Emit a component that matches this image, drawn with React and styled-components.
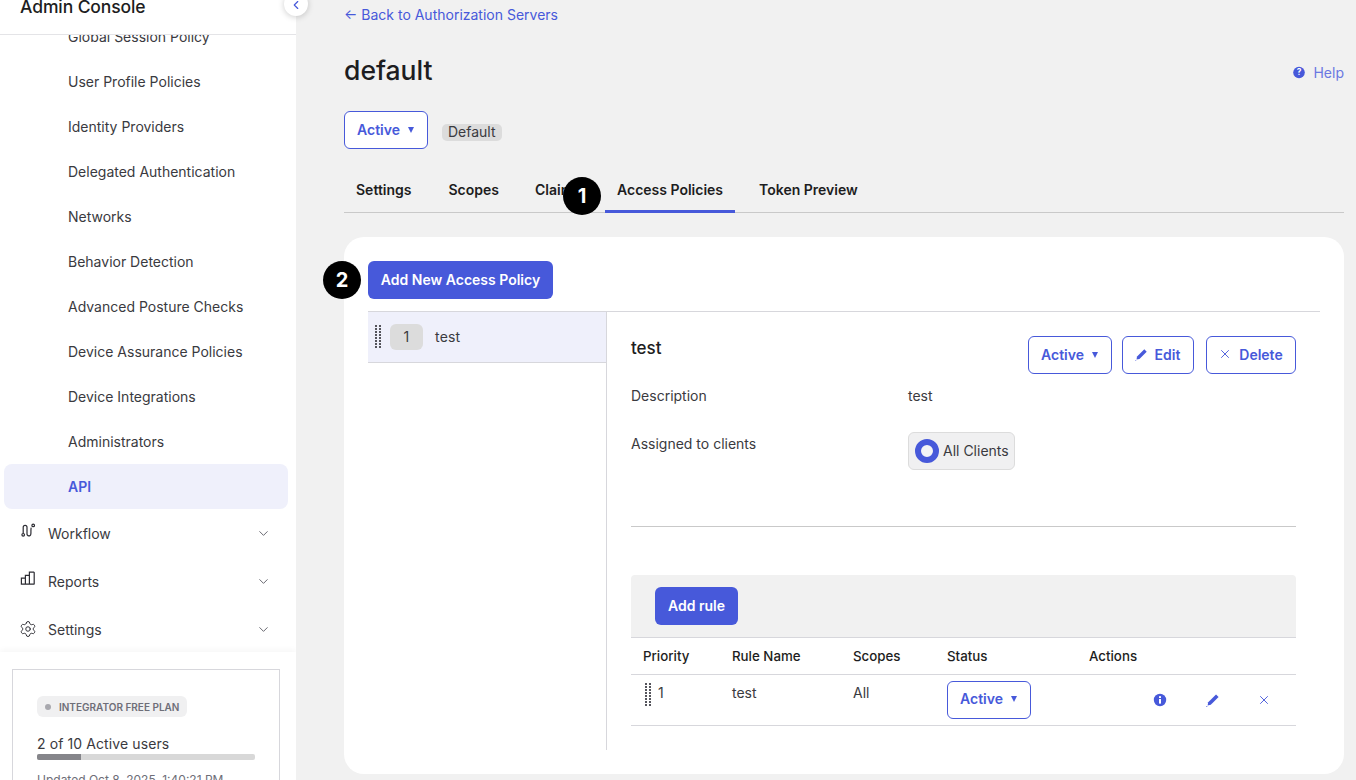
import React from "react";
import styled, { createGlobalStyle } from "styled-components";
import { ChevronDown, ChevronLeft, Settings, X } from "lucide-react";

const BLUE = "#4759da";
const INK = "#1d1d21";
const TEXT = "#3a3a40";
const LINE = "#d7d7dc";

const GlobalStyle = createGlobalStyle`
  html, body { margin: 0; padding: 0; height: 780px; overflow: hidden; background: #f1f1f1; }
  body { font-family: Inter, "Liberation Sans", sans-serif; font-size: 14px; color: ${INK}; }
  *, *::before, *::after { box-sizing: border-box; }
`;

const Page = styled.div`
  display: flex;
  width: 1356px;
  height: 780px;
  overflow: hidden;
`;

/* ---- sidebar ---- */
const Sidebar = styled.aside`
  position: relative;
  flex: 0 0 296px;
  height: 780px;
  background: #fff;
  display: flex;
  flex-direction: column;
`;
const SideHeader = styled.div`
  flex: 0 0 35px;
  border-bottom: 1px solid #e4e4e7;
  padding: 0 0 0 20px;
  overflow: hidden;
  position: relative;
  z-index: 1;
  background: #fff;
`;
const Brand = styled.div`
  margin-top: -4px;
  font-size: 17.5px;
  line-height: 22px;
  letter-spacing: -0.1px;
  font-weight: 500;
  color: ${INK};
`;
const CollapseButton = styled.button`
  position: absolute;
  top: -8px;
  left: 284px;
  width: 24px;
  height: 24px;
  border: 0;
  border-radius: 50%;
  background: #fff;
  box-shadow: 0 1px 6px rgba(0, 0, 0, 0.2);
  color: ${BLUE};
  display: flex;
  align-items: flex-end;
  justify-content: center;
  padding: 0 0 4px;
  z-index: 2;
`;
const Nav = styled.nav`
  flex: 1;
  min-height: 0;
  overflow: hidden;
`;
const NavList = styled.div`
  margin-top: -21px;
  padding: 0 8px 0 4px;
`;
const NavItem = styled.div`
  height: 45px;
  display: flex;
  align-items: center;
  padding-left: 64px;
  font-size: 14px;
  line-height: 20px;
  border-radius: 8px;
  color: ${(p) => (p.$active ? BLUE : TEXT)};
  font-weight: ${(p) => (p.$active ? 600 : 400)};
  background: ${(p) => (p.$active ? "#eff0fb" : "transparent")};
`;
const NavGroup = styled.div`
  height: 48px;
  display: flex;
  align-items: center;
  margin-left: 16px;
  margin-right: 17px;
  font-size: 14px;
  color: ${TEXT};
  &:first-of-type { margin-top: 1px; }
  svg.lead { flex: 0 0 16px; margin: -4px 12px 0 0; color: #2c2c33; }
  svg.gear { flex: 0 0 18px; margin: 0 11px 0 -1px; color: #2c2c33; }
  svg.chev { margin-left: auto; color: #5f5f68; }
`;
const Footer = styled.div`
  flex: 0 0 128px;
  min-height: 0;
  overflow: hidden;
  padding: 17px 16px 0 12px;
  box-shadow: 0 -2px 6px rgba(0, 0, 0, 0.04);
  background: #fff;
  position: relative;
`;
const PlanBox = styled.div`
  border: 1px solid ${LINE};
  padding: 26px 24px 0;
  height: 140px;
`;
const PlanChip = styled.div`
  display: flex;
  align-items: center;
  gap: 8px;
  width: fit-content;
  height: 21px;
  padding: 0 8px;
  background: #f0f0f1;
  border-radius: 6px;
  font-size: 10px;
  font-weight: 600;
  color: #6e6e78;
  &::before {
    content: "";
    width: 6px;
    height: 6px;
    border-radius: 50%;
    background: #a8a8ae;
  }
`;
const PlanText = styled.div`
  margin-top: 17px;
  font-size: 14px;
  line-height: 20px;
  letter-spacing: 0.1px;
  color: ${TEXT};
`;
const Progress = styled.div`
  height: 6px;
  width: 218px;
  border-radius: 2px;
  background: #d8d8d8;
  overflow: hidden;
`;
const ProgressFill = styled.div`
  height: 100%;
  background: #85858a;
`;
const Updated = styled.div`
  margin-top: 12px;
  font-size: 12px;
  line-height: 16px;
  color: #6e6e78;
`;

/* ---- main ---- */
const Main = styled.main`
  position: relative;
  flex: 1;
  padding: 0 12px 0 48px;
  background: #f1f1f1;
`;
const BackLink = styled.a`
  display: block;
  height: 30px;
  font-size: 14px;
  line-height: 30px;
  color: ${BLUE};
`;
const TitleRow = styled.div`
  display: flex;
  justify-content: space-between;
  align-items: center;
  height: 44px;
  margin-top: 17px;
`;
const Title = styled.h1`
  margin: 1px 0 0;
  font-size: 26.5px;
  line-height: 44px;
  font-weight: 500;
  color: ${INK};
`;
const Help = styled.a`
  display: flex;
  align-items: center;
  gap: 8px;
  margin-top: 6px;
  font-size: 14px;
  color: #6a78e2;
`;
const StatusRow = styled.div`
  display: flex;
  align-items: center;
  gap: 14px;
  margin-top: 20px;
`;
const OutlineButton = styled.button`
  display: inline-flex;
  align-items: center;
  justify-content: center;
  gap: ${(p) => p.$gap || 8}px;
  height: 38px;
  width: ${(p) => p.$w}px;
  margin-left: ${(p) => p.$ml || 0}px;
  padding: 0 1px 2px 0;
  background: #fff;
  border: 1px solid ${BLUE};
  border-radius: 6px;
  color: ${BLUE};
  font-family: inherit;
  font-size: 14px;
  font-weight: 600;
`;
const Caret = styled.span`
  width: 0;
  height: 0;
  margin-top: 1px;
  border-left: 3.5px solid transparent;
  border-right: 3.5px solid transparent;
  border-top: 6px solid ${BLUE};
`;
const DefaultTag = styled.span`
  height: 17px;
  margin-top: 4px;
  padding: 0 6px;
  border-radius: 5px;
  background: #dcdcdc;
  font-size: 14px;
  line-height: 16px;
  color: ${TEXT};
`;
const Tabs = styled.div`
  display: flex;
  gap: 12px;
  height: 46px;
  margin-top: 18px;
  border-bottom: 1px solid #c9c9c9;
`;
const Tab = styled.div`
  height: 46px;
  padding: 1px 12px 0;
  display: flex;
  align-items: center;
  font-size: 14px;
  font-weight: 600;
  color: ${INK};
  border-bottom: 3px solid ${(p) => (p.$active ? BLUE : "transparent")};
  &:first-child { padding-right: 13px; }
`;
const StepBadge = styled.div`
  position: absolute;
  left: ${(p) => p.$x - 296}px;
  top: ${(p) => p.$y}px;
  width: 38px;
  height: 38px;
  border-radius: 50%;
  background: #000;
  color: #fff;
  font-size: 20px;
  font-weight: 700;
  display: flex;
  align-items: center;
  justify-content: center;
  z-index: 3;
`;
const Card = styled.section`
  margin-top: 24px;
  height: 537px;
  padding: 24px 24px 0;
  border-radius: 20px;
  background: #fff;
`;
const SolidButton = styled.button`
  height: 38px;
  width: ${(p) => p.$w}px;
  padding: 0 0 2px;
  border: 0;
  border-radius: 6px;
  background: ${BLUE};
  color: #fff;
  font-family: inherit;
  font-size: 14px;
  font-weight: 600;
`;
const Split = styled.div`
  display: flex;
  margin-top: 12px;
  border-top: 1px solid ${LINE};
  height: 439px;
`;
const PolicyList = styled.div`
  flex: 0 0 239px;
  border-right: 1px solid ${LINE};
`;
const PolicyRow = styled.div`
  height: 51px;
  display: flex;
  align-items: center;
  padding: 0 0 1px 7px;
  background: #eff0fb;
  border-bottom: 1px solid ${LINE};
  font-size: 14px;
  letter-spacing: 0.2px;
  color: ${TEXT};
`;
const DragDots = styled.span`
  display: inline-block;
  flex: 0 0 6px;
  width: 6px;
  height: 23px;
  background-image: radial-gradient(circle at 1px 1px, #55555c 1px, transparent 1.2px);
  background-size: 4px 3px;
`;
const PriorityChip = styled.span`
  width: 33px;
  height: 26px;
  margin: 0 12px 0 9px;
  border-radius: 6px;
  background: #dcdcdc;
  display: flex;
  align-items: center;
  justify-content: center;
`;
const Detail = styled.div`
  flex: 1;
  padding: 24px 24px 0;
`;
const DetailHead = styled.div`
  display: flex;
  align-items: center;
  height: 38px;
`;
const PolicyName = styled.div`
  margin-right: auto;
  margin-top: -14px;
  font-size: 17px;
  font-weight: 500;
  color: ${INK};
`;
const HeadActions = styled.div`
  display: flex;
  gap: 10px;
`;
const Field = styled.div`
  display: flex;
  margin-top: ${(p) => p.$top}px;
  min-height: 20px;
  font-size: 14px;
  line-height: 20px;
  color: ${TEXT};
`;
const FieldLabel = styled.div`
  flex: 0 0 277px;
  padding-top: ${(p) => p.$top || 0}px;
`;
const ClientChip = styled.div`
  display: flex;
  align-items: center;
  gap: 4px;
  width: 107px;
  height: 38px;
  padding-left: 6px;
  white-space: nowrap;
  background: #f0f0f1;
  border: 1px solid #dcdcdc;
  border-radius: 6px;
  &::before {
    content: "";
    flex: 0 0 24px;
    width: 24px;
    height: 24px;
    border-radius: 50%;
    border: 6.5px solid ${BLUE};
    background: #f4f4f6;
  }
`;
const Divider = styled.hr`
  margin: 56px 0 48px;
  border: 0;
  border-top: 1px solid #c9c9c9;
`;
const RuleBar = styled.div`
  height: 63px;
  padding: 12px 24px;
  background: #f1f1f1;
  border-bottom: 1px solid ${LINE};
  border-radius: 4px 4px 0 0;
`;
const RuleTable = styled.table`
  width: 665px;
  table-layout: fixed;
  border-collapse: collapse;
  font-size: 14px;
`;
const HeadCell = styled.th`
  width: ${(p) => p.$w}px;
  height: 36px;
  padding: 0 12px;
  text-align: left;
  font-size: 13.3px;
  font-weight: 500;
  color: ${INK};
  border-bottom: 1px solid ${LINE};
`;
const Cell = styled.td`
  height: 51px;
  padding: 10px 12px 0;
  vertical-align: top;
  line-height: 16px;
  color: ${TEXT};
  border-bottom: 1px solid ${LINE};
`;
const StatusCell = styled(Cell)`
  padding: 6px 12px 0;
`;
const PriorityCell = styled.div`
  display: flex;
  align-items: flex-start;
  gap: 7px;
  margin: -2px 0 0 2px;
  line-height: 20px;
`;
const ActionIcons = styled.div`
  display: flex;
  justify-content: flex-end;
  align-items: center;
  height: 38px;
  padding-right: 13px;
  gap: 37px;
  color: ${BLUE};
  svg:first-child { margin-right: 2px; }
`;

const PencilIcon = ({ size = 14 }) => (
  <svg width={size} height={size} viewBox="1 1 12 12" fill="currentColor">
    <path d="M9.6 2.2l2.2 2.2-6.7 6.7-2.7.6.5-2.8z" />
    <path d="M1 12.2h1.2v.8H1z" opacity="0.6" />
  </svg>
);

const InfoIcon = () => (
  <svg width="14" height="14" viewBox="0 0 14 14">
    <circle cx="7" cy="7" r="6.2" fill="currentColor" />
    <rect x="6" y="6" width="2" height="4.6" fill="#fff" />
    <rect x="6" y="3.2" width="2" height="1.8" fill="#fff" />
  </svg>
);

const HelpIcon = () => (
  <svg width="12" height="13" viewBox="0 0 13 13">
    <circle cx="6.5" cy="6.5" r="6.3" fill={BLUE} />
    <text x="6.5" y="9.7" textAnchor="middle" fontSize="9" fontWeight="700" fill="#fff" fontFamily="Inter, sans-serif">
      ?
    </text>
  </svg>
);

const WorkflowIcon = () => (
  <svg className="lead" width="16" height="16" viewBox="0 0 16 16" fill="none" stroke="currentColor" strokeWidth="1.2">
    <circle cx="3.2" cy="11.8" r="1.3" />
    <circle cx="13.2" cy="2.4" r="1.3" />
    <path d="M3.2 10.2V4.2a1.9 1.9 0 0 1 3.8 0v6.6a1.9 1.9 0 0 0 3.8.4c.4-1.4-.2-5 .4-6.6" />
  </svg>
);

const ReportsIcon = () => (
  <svg className="lead" width="16" height="16" viewBox="0 0 16 16" fill="none" stroke="currentColor" strokeWidth="1.2">
    <path d="M1.4 7.2h4v6h-4zM5.4 4.4h4v8.8h-4zM9.4 1.2h4.4a.4.4 0 0 1 .4.4v11.2a.4.4 0 0 1-.4.4H9.4z" />
  </svg>
);

const subItems = [
  "Global Session Policy",
  "User Profile Policies",
  "Identity Providers",
  "Delegated Authentication",
  "Networks",
  "Behavior Detection",
  "Advanced Posture Checks",
  "Device Assurance Policies",
  "Device Integrations",
  "Administrators",
];

const tabs = ["Settings", "Scopes", "Claims", "Access Policies", "Token Preview"];

const App = () => (
  <>
    <GlobalStyle />
    <Page>
      <Sidebar>
        <SideHeader>
          <Brand>Admin Console</Brand>
        </SideHeader>
        <CollapseButton aria-label="Collapse">
          <ChevronLeft size={14} strokeWidth={2} />
        </CollapseButton>
        <Nav>
          <NavList>
            {subItems.map((item) => (
              <NavItem key={item}>{item}</NavItem>
            ))}
            <NavItem $active>API</NavItem>
            <NavGroup>
              <WorkflowIcon />
              Workflow
              <ChevronDown className="chev" size={15} strokeWidth={1.5} />
            </NavGroup>
            <NavGroup>
              <ReportsIcon />
              Reports
              <ChevronDown className="chev" size={15} strokeWidth={1.5} />
            </NavGroup>
            <NavGroup>
              <Settings className="gear" size={18} strokeWidth={1.3} />
              Settings
              <ChevronDown className="chev" size={15} strokeWidth={1.5} />
            </NavGroup>
          </NavList>
        </Nav>
        <Footer>
          <PlanBox>
            <PlanChip>INTEGRATOR FREE PLAN</PlanChip>
            <PlanText>2 of 10 Active users</PlanText>
            <Progress>
              <ProgressFill style={{ width: `${(2 / 10) * 100}%` }} />
            </Progress>
            <Updated>Updated Oct 8, 2025, 1:40:21 PM</Updated>
          </PlanBox>
        </Footer>
      </Sidebar>

      <Main>
        <BackLink>← Back to Authorization Servers</BackLink>
        <TitleRow>
          <Title>default</Title>
          <Help>
            <HelpIcon />
            Help
          </Help>
        </TitleRow>
        <StatusRow>
          <OutlineButton $w={84}>
            Active <Caret />
          </OutlineButton>
          <DefaultTag>Default</DefaultTag>
        </StatusRow>
        <Tabs>
          {tabs.map((tab) => (
            <Tab key={tab} $active={tab === "Access Policies"}>
              {tab}
            </Tab>
          ))}
        </Tabs>
        <StepBadge $x={563} $y={177}>1</StepBadge>
        <StepBadge $x={323} $y={261}>2</StepBadge>
        <Card>
          <SolidButton $w={185}>Add New Access Policy</SolidButton>
          <Split>
            <PolicyList>
              <PolicyRow>
                <DragDots />
                <PriorityChip>1</PriorityChip>
                test
              </PolicyRow>
            </PolicyList>
            <Detail>
              <DetailHead>
                <PolicyName>test</PolicyName>
                <HeadActions>
                  <OutlineButton $w={84}>
                    Active <Caret />
                  </OutlineButton>
                  <OutlineButton $w={72} $gap={7}>
                    <PencilIcon size={13} /> Edit
                  </OutlineButton>
                  <OutlineButton $w={90} $gap={7} $ml={2}>
                    <X size={14} strokeWidth={1.6} /> Delete
                  </OutlineButton>
                </HeadActions>
              </DetailHead>
              <Field $top={12}>
                <FieldLabel>Description</FieldLabel>
                <div>test</div>
              </Field>
              <Field $top={26}>
                <FieldLabel $top={2}>Assigned to clients</FieldLabel>
                <ClientChip>All Clients</ClientChip>
              </Field>
              <Divider />
              <RuleBar>
                <SolidButton $w={83}>Add rule</SolidButton>
              </RuleBar>
              <RuleTable>
                <thead>
                  <tr>
                    <HeadCell $w={89}>Priority</HeadCell>
                    <HeadCell $w={121}>Rule Name</HeadCell>
                    <HeadCell $w={94}>Scopes</HeadCell>
                    <HeadCell $w={142}>Status</HeadCell>
                    <HeadCell $w={219}>Actions</HeadCell>
                  </tr>
                </thead>
                <tbody>
                  <tr>
                    <Cell>
                      <PriorityCell>
                        <DragDots />1
                      </PriorityCell>
                    </Cell>
                    <Cell>test</Cell>
                    <Cell>All</Cell>
                    <StatusCell>
                      <OutlineButton $w={84}>
                        Active <Caret />
                      </OutlineButton>
                    </StatusCell>
                    <StatusCell>
                      <ActionIcons>
                        <InfoIcon />
                        <PencilIcon />
                        <X size={14} strokeWidth={1.6} />
                      </ActionIcons>
                    </StatusCell>
                  </tr>
                </tbody>
              </RuleTable>
            </Detail>
          </Split>
        </Card>
      </Main>
    </Page>
  </>
);

export default App;
